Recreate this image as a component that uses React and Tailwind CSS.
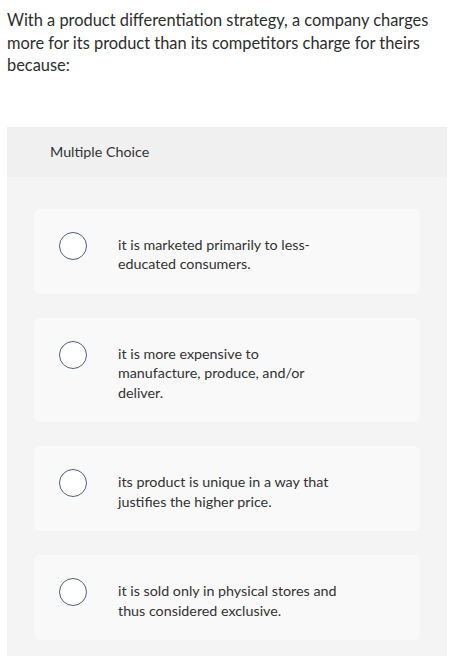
const options = [
  ['it is marketed primarily to less-', 'educated consumers.'],
  ['it is more expensive to', 'manufacture, produce, and/or', 'deliver.'],
  ['its product is unique in a way that', 'justifies the higher price.'],
  ['it is sold only in physical stores and', 'thus considered exclusive.'],
];

const question = [
  'With a product differentiation strategy, a company charges',
  'more for its product than its competitors charge for theirs',
  'because:',
];

function Option({ lines }) {
  return (
    <div className="flex items-start rounded-md bg-[#f9f9f9] pl-[25px] pr-6 pt-[26px] pb-[20px]">
      <div className="mt-[-3px] h-[28px] w-[28px] shrink-0 rounded-full border-[1.5px] border-[#4e6079] bg-white" />
      <div className="ml-[31px] text-[14.3px] leading-[19.5px] text-[#333]">
        {lines.map((l, i) => (
          <div key={i}>{l}</div>
        ))}
      </div>
    </div>
  );
}

export default function App() {
  return (
    <div className="min-h-screen bg-white font-['Lato',sans-serif]">
      <div className="px-[7px] pt-[9px] text-[16.4px] leading-[22.5px] text-[#2d2d2d]">
        {question.map((l, i) => (
          <div key={i}>{l}</div>
        ))}
      </div>
      <div className="ml-[7px] mr-[27px] mt-[50px] bg-[#f4f4f4]">
        <div className="flex h-[50px] items-center bg-[#f0f0f0] pl-[43px] text-[14.3px] text-[#333]">
          Multiple Choice
        </div>
        <div className="flex flex-col gap-[24px] px-[27px] pt-[32px] pb-[16px]">
          {options.map((o, i) => (
            <Option key={i} lines={o} />
          ))}
        </div>
      </div>
    </div>
  );
}
